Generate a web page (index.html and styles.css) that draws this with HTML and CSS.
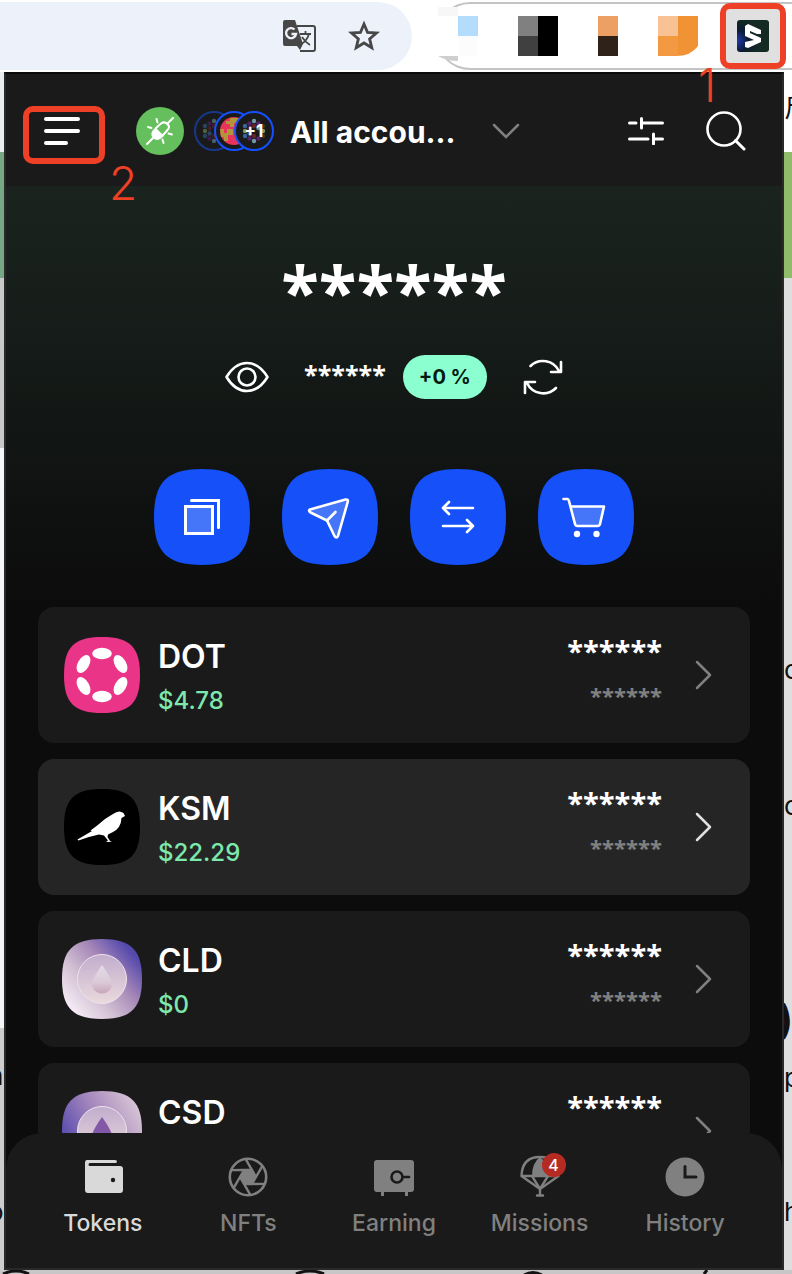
FILE: index.html
```html
<!DOCTYPE html>
<html lang="en">
<head>
<meta charset="utf-8">
<meta name="viewport" content="width=device-width, initial-scale=1">
<title>Wallet extension</title>
<link rel="stylesheet" href="styles.css">
</head>
<body>
<header class="toolbar">
  <div class="address">
    <button class="tool" aria-label="Translate">
      <svg width="34" height="34" viewBox="0 0 34 34"><path d="M15 7H31Q33 7 33 9V30Q33 32 31 32H18" fill="none" stroke="#474747" stroke-width="2"/><path d="M3 1H13L21 25L18 31L15 27H3Q1 27 1 25V3Q1 1 3 1Z" fill="#474747"/><path d="M12.500 10.500A5 5 0 1 0 14 15H9.500" fill="none" stroke="#edf2fa" stroke-width="2.400"/><path d="M18 15H29M23.500 12V15M27 15Q25 22 18 26M20 18Q23 23 28 26" fill="none" stroke="#474747" stroke-width="1.800"/></svg>
    </button>
    <button class="tool" aria-label="Bookmark">
      <svg width="32" height="32" viewBox="0 0 32 32"><path d="M16 4L19.500 12.300L28.500 13L21.600 18.900L23.800 27.700L16 23L8.200 27.700L10.400 18.900L3.500 13L12.500 12.300Z" fill="none" stroke="#474747" stroke-width="2.800"/></svg>
    </button>
  </div>
  <div class="extensions">
    <svg class="tile" width="40" height="60" viewBox="0 0 40 60"><path d="M-4 1H20V50H-4Z" fill="#fff"/><path d="M0 1H20V10H0Z" fill="#f7f7f7"/><path d="M0 50H20V55Q8 55 0 50Z" fill="#cfcfcf"/><path d="M20 10H40V30H20Z" fill="#b3dcfd"/><path d="M20 30H40V50H20Z" fill="#fcfcfc"/></svg>
    <svg class="tile" width="40" height="40" viewBox="0 0 40 40"><path d="M0 0H20V20H0Z" fill="#808080"/><path d="M0 20H20V40H0Z" fill="#404040"/><path d="M20 0H40V40H20Z"/></svg>
    <svg class="tile" width="20" height="40" viewBox="0 0 20 40"><path d="M0 0H20V20H0Z" fill="#eea063"/><path d="M0 20H20V40H0Z" fill="#2e2219"/></svg>
    <svg class="tile" width="40" height="40" viewBox="0 0 40 40"><path d="M0 0H40V30Q33 40 18 40H0Z" fill="#f09335"/><path d="M0 0H20V20H0Z" fill="#f9c294"/><path d="M0 20H20V40H0Z" fill="#f29942"/></svg>
    <button class="active-ext" aria-label="Wallet">
      <svg width="32" height="32" viewBox="0 0 32 32"><defs><radialGradient id="eg" cx="0" cy=".65" r=".7"><stop offset="0" stop-color="#1d3bb0"/><stop offset=".5" stop-color="#0e1a33"/><stop offset="1" stop-color="#142a22"/></radialGradient></defs><rect width="32" height="32" rx="3" fill="url(#eg)"/><path d="M8 6L11 4L24 10V14L20 14L13 11V13L24 18V22L11 28L8 27V22L17 20L8 16Z" fill="#fff"/></svg>
      <span class="step step-one">1</span>
    </button>
  </div>
</header>

<div class="stage">
  <div class="strip strip-left" aria-hidden="true">
    <div class="l1"></div><div class="l2"></div><div class="l3"></div><div class="l4"></div><div class="l5"><span class="frag">h</span><span class="frag">o</span></div>
  </div>

  <main class="popup">
    <div class="top">
      <button class="menu" aria-label="Menu">
        <svg width="36" height="28" viewBox="0 0 36 28"><path d="M2 2H34M2 14H34M2 26H22" stroke="#fff" stroke-width="4" stroke-linecap="round"/></svg>
        <span class="step step-two">2</span>
      </button>
      <button class="connect" aria-label="Connection">
        <svg width="48" height="48" viewBox="0 0 48 48"><circle cx="24" cy="24" r="24" fill="#64bf5c"/><g stroke="#fff" stroke-width="2" stroke-linecap="round" fill="none"><path d="M11 37L17 31M31 17L37 11M12 20L15.500 21M20.500 12L21.500 15.500M32.500 26.500L36 27.500M26.500 32.500L27.500 36"/><path d="M20 21L25 16.500Q28.500 14 31.500 17T31.500 23L27 28"/></g><path d="M19.500 20.500L28 29L25 31.500Q20.500 34.500 17 31T17 23Z" fill="#fff"/></svg>
      </button>
      <button class="account" aria-label="Select account">
        <svg class="avatars" width="80" height="40" viewBox="0 0 80 40"><defs><g id="dots"><g fill="#6f98a8"><circle cx="20" cy="10" r="2.200"/><circle cx="20" cy="30" r="2.200"/><circle cx="24.500" cy="17" r="2.200"/></g><g fill="#56236e"><circle cx="15.500" cy="12.500" r="2.200"/><circle cx="24.500" cy="12.500" r="2.200"/><circle cx="15.500" cy="27.500" r="2.200"/><circle cx="24.500" cy="27.500" r="2.200"/></g><g fill="#3866a0"><circle cx="11" cy="15" r="2.200"/><circle cx="11" cy="25" r="2.200"/><circle cx="15.500" cy="22.500" r="2.200"/></g><g fill="#7a9d62"><circle cx="11" cy="20" r="2.200"/><circle cx="29" cy="20" r="2.200"/></g><g fill="#652528"><circle cx="15.500" cy="17.500" r="2.200"/><circle cx="20" cy="15" r="2.200"/><circle cx="20" cy="25" r="2.200"/></g><g fill="#393c20"><circle cx="29" cy="15" r="2.200"/><circle cx="29" cy="25" r="2.200"/></g></g></defs><g opacity=".55"><circle cx="20" cy="20" r="19" fill="#1a1a1a" stroke="#1550e8" stroke-width="2"/><use href="#dots"/></g><circle cx="40" cy="20" r="19" fill="#1a1a1a" stroke="#1550ff" stroke-width="2"/><circle cx="40" cy="20" r="14" fill="#e8345b"/><path d="M36 7H46V12H40V16H36V13H32V10H36ZM26 18H30V22H33V18H39V24H34V30H30V26H27Z" fill="#b2963a"/><circle cx="60" cy="20" r="19" fill="#1a1a1a" stroke="#1550ff" stroke-width="2"/><use href="#dots" x="40"/><text class="more" x="60" y="26" text-anchor="middle">+1</text></svg>
        <span class="account-name">All accou...</span>
        <svg width="28" height="16" viewBox="0 0 28 16"><path d="M2 2L14 14L26 2" fill="none" stroke="#808080" stroke-width="2.500" stroke-linecap="round"/></svg>
      </button>
      <button class="customize" aria-label="Customize">
        <svg width="36" height="28" viewBox="0 0 36 28"><path d="M1.500 6H8M14 6H34.500M13.500 1.500V11M1.500 22H20M26 22H34.500M25.500 17V27" fill="none" stroke="#fff" stroke-width="3" stroke-linecap="round"/></svg>
      </button>
      <button aria-label="Search">
        <svg width="40" height="40" viewBox="0 0 40 40"><circle cx="18" cy="18" r="16.500" fill="none" stroke="#fff" stroke-width="2.600"/><path d="M29.500 29.500L38 38" stroke="#fff" stroke-width="3" stroke-linecap="round"/></svg>
      </button>
    </div>

    <div class="content">
      <section class="hero">
        <div class="balance stars">******</div>
        <div class="summary">
          <button aria-label="Show balance"><svg width="44" height="32" viewBox="0 0 44 32"><path d="M1.500 16Q10 2 22 2T42.500 16Q34 30 22 30T1.500 16Z" fill="none" stroke="#fff" stroke-width="2.600" stroke-linejoin="round"/><circle cx="22" cy="16" r="8.500" fill="none" stroke="#fff" stroke-width="2.600"/></svg></button>
          <span class="change stars">******</span>
          <span class="pill">+0 %</span>
          <button class="refresh" aria-label="Refresh"><svg width="40" height="40" viewBox="0 0 40 40"><path d="M7.500 9A18 18 0 0 1 36 14M38 5V15H28M33 31A18 18 0 0 1 4 26M2 36V25H12" fill="none" stroke="#fff" stroke-width="2.600" stroke-linecap="round" stroke-linejoin="round"/></svg></button>
        </div>
        <div class="actions">
          <button aria-label="Receive"><svg width="96" height="96" viewBox="0 0 96 96"><path d="M48 0C83 0 96 13 96 48S83 96 48 96 0 83 0 48 13 0 48 0Z" fill="#1550f8"/><path d="M31.500 37.500H58.500V64.500H31.500Z" fill="#4576fa"/><path d="M31.500 37.500H58.500V64.500H31.500ZM37.500 31.500H64.500V58.500" fill="none" stroke="#fff" stroke-width="3" stroke-linecap="round"/></svg></button>
          <button aria-label="Send"><svg width="96" height="96" viewBox="0 0 96 96"><path d="M48 0C83 0 96 13 96 48S83 96 48 96 0 83 0 48 13 0 48 0Z" fill="#1550f8"/><path d="M28 40.500L63.500 30.500Q66.500 30 65.700 33L56 67Q54.500 70 52.500 67L45 51.500L28.500 43.500Q26 41.500 28 40.500Z" fill="#4576fa" stroke="#fff" stroke-width="2.600" stroke-linejoin="round"/><path d="M45 51.500L53.500 43" stroke="#fff" stroke-width="2.600" stroke-linecap="round"/></svg></button>
          <button aria-label="Swap"><svg width="96" height="96" viewBox="0 0 96 96"><path d="M48 0C83 0 96 13 96 48S83 96 48 96 0 83 0 48 13 0 48 0Z" fill="#1550f8"/><path d="M63 39H33M39 33L33 39L39 45M33 57H63M57 51L63 57L57 63" fill="none" stroke="#fff" stroke-width="2.600" stroke-linecap="round" stroke-linejoin="round"/></svg></button>
          <button aria-label="Buy"><svg width="96" height="96" viewBox="0 0 96 96"><path d="M48 0C83 0 96 13 96 48S83 96 48 96 0 83 0 48 13 0 48 0Z" fill="#1550f8"/><path d="M32.500 37.500H66L61 57H38Z" fill="#4576fa"/><path d="M25.500 30H29.500Q30.500 30 31 32L37 55Q37.500 57 39.500 57H59.500Q61.500 57 62 55L66 37.500H32.500" fill="none" stroke="#fff" stroke-width="2.600" stroke-linecap="round" stroke-linejoin="round"/><circle cx="39" cy="65" r="3.200" fill="#fff"/><circle cx="58.500" cy="65" r="3.200" fill="#fff"/></svg></button>
        </div>
      </section>

      <section class="tokens">
        <button class="card">
          <svg width="80" height="80" viewBox="0 0 80 80"><path d="M40 2C68 2 78 12 78 40S68 78 40 78 2 68 2 40 12 2 40 2Z" fill="#e93488"/><g fill="#fff"><ellipse cx="40" cy="18.500" rx="9.800" ry="5.700"/><ellipse cx="40" cy="61.500" rx="9.800" ry="5.700"/><ellipse cx="21.500" cy="29" rx="9.800" ry="5.700" transform="rotate(-60 21.500 29)"/><ellipse cx="58.500" cy="29" rx="9.800" ry="5.700" transform="rotate(60 58.500 29)"/><ellipse cx="21.500" cy="51" rx="9.800" ry="5.700" transform="rotate(60 21.500 51)"/><ellipse cx="58.500" cy="51" rx="9.800" ry="5.700" transform="rotate(-60 58.500 51)"/></g></svg>
          <span class="info"><span class="name">DOT</span><span class="price">$4.78</span></span>
          <span class="amounts stars"><span class="amount">******</span><span class="fiat">******</span></span>
          <svg class="chevron" width="48" height="32" viewBox="0 0 48 32"><path d="M19 3L32 16L19 29"/></svg>
        </button>
        <button class="card card-hover">
          <svg width="80" height="80" viewBox="0 0 80 80"><path d="M40 2C68 2 78 12 78 40S68 78 40 78 2 68 2 40 12 2 40 2Z"/><path d="M15.500 52.500L30 44L28.500 43.500Q35 39 43 32L51 27Q57 22.500 61.500 26L63 29L59.500 31Q59 41 51 45L46 47.500L45.500 50L48 54L50 54.700L44 55L46 53.500L42 48.500L37 47.500Q27 49.500 16.500 53.500Z" fill="#fff"/></svg>
          <span class="info"><span class="name">KSM</span><span class="price">$22.29</span></span>
          <span class="amounts stars"><span class="amount">******</span><span class="fiat">******</span></span>
          <svg class="chevron" width="48" height="32" viewBox="0 0 48 32"><path d="M19 3L32 16L19 29"/></svg>
        </button>
        <button class="card">
          <svg width="80" height="80" viewBox="0 0 80 80"><defs><linearGradient id="cg" x1=".1" y1=".9" x2=".9" y2=".2"><stop offset="0" stop-color="#f8eef8"/><stop offset=".35" stop-color="#d2c0d3"/><stop offset=".68" stop-color="#a486b7"/><stop offset="1" stop-color="#5549ac"/></linearGradient><linearGradient id="disc" x2="0" y2="1"><stop offset="0" stop-color="#c1adcd"/><stop offset="1" stop-color="#ead9dc"/></linearGradient><linearGradient id="drop" x2="0" y2="1"><stop offset="0" stop-color="#e6dbe6"/><stop offset=".6" stop-color="#dacad9"/><stop offset="1" stop-color="#c9a5b8"/></linearGradient></defs><path d="M40 0C69 0 80 11 80 40S69 80 40 80 0 69 0 40 11 0 40 0Z" fill="url(#cg)"/><circle cx="40" cy="40" r="24.500" fill="url(#disc)" stroke="#eee2ed"/><path d="M40 26Q50 40 50 45A10 9.500 0 0 1 30 45Q30 40 40 26Z" fill="url(#drop)"/></svg>
          <span class="info"><span class="name">CLD</span><span class="price">$0</span></span>
          <span class="amounts stars"><span class="amount">******</span><span class="fiat">******</span></span>
          <svg class="chevron" width="48" height="32" viewBox="0 0 48 32"><path d="M19 3L32 16L19 29"/></svg>
        </button>
        <button class="card">
          <svg width="80" height="80" viewBox="0 0 80 80"><defs><linearGradient id="sg" x1="0" y1=".6" x2=".9" y2=".1"><stop offset="0" stop-color="#5549ac"/><stop offset=".55" stop-color="#a98bbd"/><stop offset="1" stop-color="#d6c4d6"/></linearGradient></defs><path d="M40 0C69 0 80 11 80 40S69 80 40 80 0 69 0 40 11 0 40 0Z" fill="url(#sg)"/><circle cx="40" cy="40" r="24.500" fill="url(#disc)" stroke="#eee2ed"/><path d="M40 26Q50 40 50 45A10 9.500 0 0 1 30 45Q30 40 40 26Z" fill="#8358a6"/></svg>
          <span class="info"><span class="name">CSD</span></span>
          <span class="amounts stars"><span class="amount">******</span></span>
          <svg class="chevron" width="48" height="32" viewBox="0 0 48 32"><path d="M19 3L32 16L19 29"/></svg>
        </button>
      </section>
    </div>

    <nav class="nav">
      <a class="item item-current" href="#tokens"><span class="icon"><svg width="44" height="44" viewBox="0 0 44 44"><path d="M6 5H34Q36 5 36 6.500T34 8H9Q7.500 8 7.500 9.500T9 11H39Q42 11 42 14V35Q42 38 39 38H7Q4 38 4 35V8Q4 5 6 5Z" fill="#d9d9d9"/><circle cx="32" cy="25" r="2.200" fill="#1a1a1a"/></svg></span>Tokens</a>
      <a class="item" href="#nfts"><span class="icon"><svg width="44" height="44" viewBox="-22 -22 44 44"><defs><path id="blade" d="M-2.300 -17.800L4 -6.930L8 0"/></defs><circle r="18.200" fill="none" stroke="#808080" stroke-width="2.600"/><path d="M8 0L4 6.930H-4L-8 0L-4 -6.930H4Z" fill="#808080"/><g fill="none" stroke="#808080" stroke-width="2.400"><use href="#blade"/><use href="#blade" transform="rotate(60)"/><use href="#blade" transform="rotate(120)"/><use href="#blade" transform="rotate(180)"/><use href="#blade" transform="rotate(240)"/><use href="#blade" transform="rotate(300)"/></g></svg></span>NFTs</a>
      <a class="item" href="#earning"><span class="icon"><svg width="44" height="44" viewBox="0 0 44 44"><path d="M5 5H39Q42 5 42 8V34Q42 37 39 37H36V41H33V37H12V41H9V37H5Q2 37 2 34V8Q2 5 5 5Z" fill="#808080"/><circle cx="25" cy="22" r="5.500" fill="none" stroke="#1a1a1a" stroke-width="2.600"/><path d="M31 22H37" stroke="#1a1a1a" stroke-width="2.600" stroke-linecap="round"/></svg></span>Earning</a>
      <a class="item" href="#missions"><span class="icon"><svg width="44" height="44" viewBox="0 0 44 44"><path d="M3.500 21Q4 2 22 2T40.500 21L22 34Z" fill="none" stroke="#808080" stroke-width="2.400" stroke-linejoin="round"/><path d="M14 21Q14 8 22 2Q30 8 30 21Z" fill="#808080"/><path d="M4 21H40M14 21L22 34L30 21M22 34V40M19 40.500H25" fill="none" stroke="#808080" stroke-width="2.400" stroke-linecap="round"/></svg><span class="badge">4</span></span>Missions</a>
      <a class="item" href="#history"><span class="icon"><svg width="44" height="44" viewBox="0 0 44 44"><circle cx="22" cy="22" r="19.500" fill="#808080"/><path d="M22 11.500V22H33" fill="none" stroke="#1a1a1a" stroke-width="3" stroke-linecap="round"/></svg></span>History</a>
    </nav>
  </main>

  <div class="strip strip-right" aria-hidden="true">
    <div class="r1"><span class="frag">斤</span></div><div class="r2"></div><div class="r3"></div>
    <div class="r4"><span class="frag">c</span><span class="frag">o</span></div><div class="r5"><span class="frag frag-bold">)</span></div><div class="r6"><span class="frag">p</span></div><div class="r7"><span class="frag">h</span></div>
  </div>
  <svg class="underline" width="792" height="4" viewBox="0 0 792 4"><path d="M3 4Q16 -2 29 4M296 4Q310 -2 324 4M524 5Q533 0 542 5M704 4L707 0" fill="none" stroke="#111" stroke-width="3"/></svg>
</div>
</body>
</html>
```
FILE: styles.css
```css
* { box-sizing: border-box; }

body {
  margin: 0;
  height: 100vh;
  display: flex;
  flex-direction: column;
  overflow: hidden;
  background: #fff;
  font-family: Inter, "Noto Sans CJK SC", sans-serif;
}

button {
  display: flex;
  align-items: center;
  margin: 0;
  padding: 0;
  border: 0;
  background: none;
  color: inherit;
  font: inherit;
}

svg { display: block; flex: none; }

.toolbar {
  display: flex;
  gap: 24px;
  height: 72px;
  padding: 2px 0;
}

.address {
  flex: 1;
  display: flex;
  justify-content: flex-end;
  align-items: center;
  gap: 32px;
  padding-right: 32px;
  border-radius: 0 34px 34px 0;
  background: #edf2fa;
}

.extensions {
  display: flex;
  align-items: center;
  gap: 40px;
  border: 2px solid #c4c4c4;
  border-right: 0;
  border-radius: 34px 0 0 34px;
}

.tile { overflow: visible; }

.active-ext {
  position: relative;
  justify-content: center;
  width: 66px;
  height: 66px;
  margin: 0 6px 0 -18px;
  border: 6px solid #ee4026;
  border-radius: 10px;
  background: #e0e0e0;
}

.step {
  position: absolute;
  color: #ee4026;
  font-size: 46px;
  font-weight: 300;
  line-height: 48px;
}

.step-one { left: -28px; top: 52px; z-index: 2; }
.step-two { left: 80px; top: 47px; }

.stage {
  flex: 1;
  min-height: 0;
  display: grid;
  grid-template-columns: 4px 1fr 8px;
  grid-template-rows: minmax(0, 1fr) 4px;
  overflow: hidden;
  background: #c8c6c6;
}

.underline { grid-column: 1 / -1; }

.strip {
  display: flex;
  flex-direction: column;
  overflow: hidden;
  background: #dedede;
  color: #111;
}

.strip div { flex: none; }

.l1 { height: 80px; background: #e9edef; }
.l2 { height: 126px; background: #76a885; }
.l3 { height: 170px; background: #c9c9c9; }
.l4 { height: 580px; background: #f3f5f8; }
.l5 { height: 242px; padding-top: 32px; background: #cdcdcd; }

.frag {
  display: block;
  width: 24px;
  font-size: 26px;
  line-height: 32px;
}

.frag-bold { font-size: 40px; font-weight: 700; }

.l5 .frag { margin: 0 0 104px -12px; }

.r1 { height: 80px; padding-top: 20px; background: #fff; }
.r2 { height: 126px; background: #8fbb6b; }
.r3 { height: 376px; }
.r4 { height: 350px; }
.r4 .frag { margin-bottom: 104px; }
.r5 { height: 58px; }
.r6 { height: 134px; }
.r5 .frag { margin-left: -6px; }

.popup {
  display: flex;
  flex-direction: column;
  min-width: 0;
  min-height: 0;
  border: 2px solid #292929;
  border-top-color: #0a0a0a;
  background: #0c0c0c;
  color: #fff;
}

.top {
  flex: none;
  display: flex;
  align-items: center;
  height: 112px;
  padding: 2px 36px 0 17px;
  background: #1a1a1a;
}

.menu {
  position: relative;
  align-items: flex-start;
  width: 82px;
  height: 58px;
  margin: 8px 31px 0 0;
  padding: 5px 15px;
  border: 6px solid #ee4026;
  border-radius: 10px;
}

.account {
  gap: 16px;
  margin-left: 10px;
}

.more { fill: #fff; font-size: 17px; font-weight: 700; }

.account-name {
  width: 186px;
  padding-top: 2px;
  text-align: left;
  font-size: 30px;
  font-weight: 700;
  line-height: 40px;
}

.customize { margin: 0 42px 0 auto; }

.content {
  flex: 1;
  min-height: 0;
  overflow: hidden;
  background: linear-gradient(#1a231e, #18201c 80px, #0c0c0c 410px);
}

.hero {
  display: flex;
  flex-direction: column;
  align-items: center;
  padding: 56px 0 42px;
}

.stars {
  font-family: "Open Sans", "Noto Sans", sans-serif;
  font-weight: 700;
}

.balance { font-size: 69px; line-height: 96px; }

.summary {
  display: flex;
  align-items: center;
  margin: 17px 0 70px;
}

.change {
  margin: 0 17px 0 35px;
  padding-bottom: 6px;
  font-size: 25px;
  line-height: 32px;
}

.pill {
  padding: 0 16px;
  border-radius: 22px;
  background: #8cffd0;
  color: #06190f;
  font-size: 20px;
  font-weight: 700;
  line-height: 44px;
}

.refresh { margin-left: 36px; }

.actions { display: flex; gap: 32px; }

.tokens {
  display: flex;
  flex-direction: column;
  gap: 16px;
  padding: 0 32px;
}

.card {
  gap: 16px;
  width: 100%;
  height: 136px;
  padding: 0 24px;
  border-radius: 16px;
  background: #1a1a1a;
}

.card-hover { background: #252525; }

.info, .amounts {
  display: flex;
  flex-direction: column;
  height: 96px;
  padding-top: 8px;
  line-height: 44px;
}

.info { flex: 1; text-align: left; }
.amounts { padding-top: 2px; text-align: right; }
.name { font-size: 32px; font-weight: 600; }
.price { color: #7de8ae; font-size: 24px; font-weight: 500; }
.amount { font-size: 29px; }
.fiat { color: #808080; font-size: 22px; }

.chevron {
  fill: none;
  stroke: #808080;
  stroke-width: 2.5px;
  stroke-linecap: round;
  stroke-linejoin: round;
}

.card-hover .chevron { stroke: #e0e0e0; }

.nav {
  flex: none;
  display: flex;
  padding: 22px 24px 29px;
  border-radius: 36px 36px 0 0;
  background: #1a1a1a;
}

.item {
  flex: 1;
  display: flex;
  flex-direction: column;
  align-items: center;
  gap: 8px;
  color: #808080;
  font-size: 23px;
  font-weight: 500;
  line-height: 32px;
  text-decoration: none;
}

.item-current { color: #d9d9d9; }

.icon { position: relative; }

.badge {
  position: absolute;
  left: 24px;
  top: -2px;
  width: 24px;
  border-radius: 12px;
  background: #b52a22;
  color: #fff;
  font-size: 16px;
  line-height: 24px;
  text-align: center;
}
```
